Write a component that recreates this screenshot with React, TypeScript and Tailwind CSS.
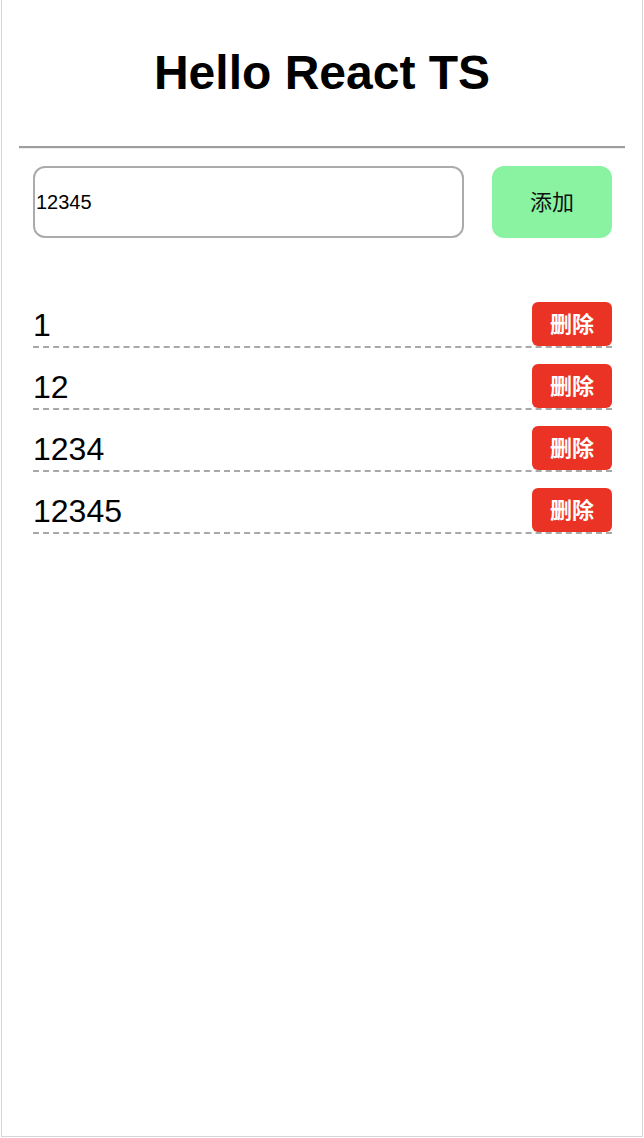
import { useState } from "react";

export default function App() {
  const [value, setValue] = useState("12345");
  const [items, setItems] = useState<string[]>(["1", "12", "1234", "12345"]);

  const handleAdd = () => {
    if (!value.trim()) return;
    setItems([...items, value]);
  };

  const handleDelete = (index: number) => {
    setItems(items.filter((_, i) => i !== index));
  };

  return (
    <div className="ml-[1px] w-[642px] h-[1137px] border border-t-0 border-[#d6d6d6] bg-white font-['Liberation_Sans','Noto_Sans_CJK_SC',sans-serif] text-black">
      <h1 className="pt-[45px] h-[128px] text-center text-[48px] leading-[56px] font-bold">Hello React TS</h1>

      {/* divider */}
      <div className="mx-[17px] mt-[18px] border-t-2 border-[#9e9e9e] border-b border-b-[#ececec]" />

      {/* input row */}
      <div className="flex items-center justify-between mt-[17px] pl-[31px] pr-[30px]">
        <input
          value={value}
          onChange={(e) => setValue(e.target.value)}
          className="w-[431px] h-[72px] rounded-[12px] border-2 border-[#ababab] pl-[1px] text-[20px] outline-none font-['Liberation_Sans',sans-serif]"
        />
        <button
          onClick={handleAdd}
          className="w-[120px] h-[72px] rounded-[12px] bg-[#8af3a2] text-[22px] text-[#111]"
        >
          添加
        </button>
      </div>

      {/* list */}
      <ul className="mt-[64px] pl-[31px] pr-[30px]">
        {items.map((item, i) => (
          <li
            key={i}
            className="flex items-end justify-between mb-[16px] h-[46px] border-b-2 border-dashed border-[#a8a8a8]"
          >
            <span className="pb-[1px] text-[32px] leading-[40px]">{item}</span>
            <button
              onClick={() => handleDelete(i)}
              className="w-[80px] h-[44px] rounded-[6px] bg-[#ea3325] text-white text-[22px] font-bold"
            >
              删除
            </button>
          </li>
        ))}
      </ul>
    </div>
  );
}
